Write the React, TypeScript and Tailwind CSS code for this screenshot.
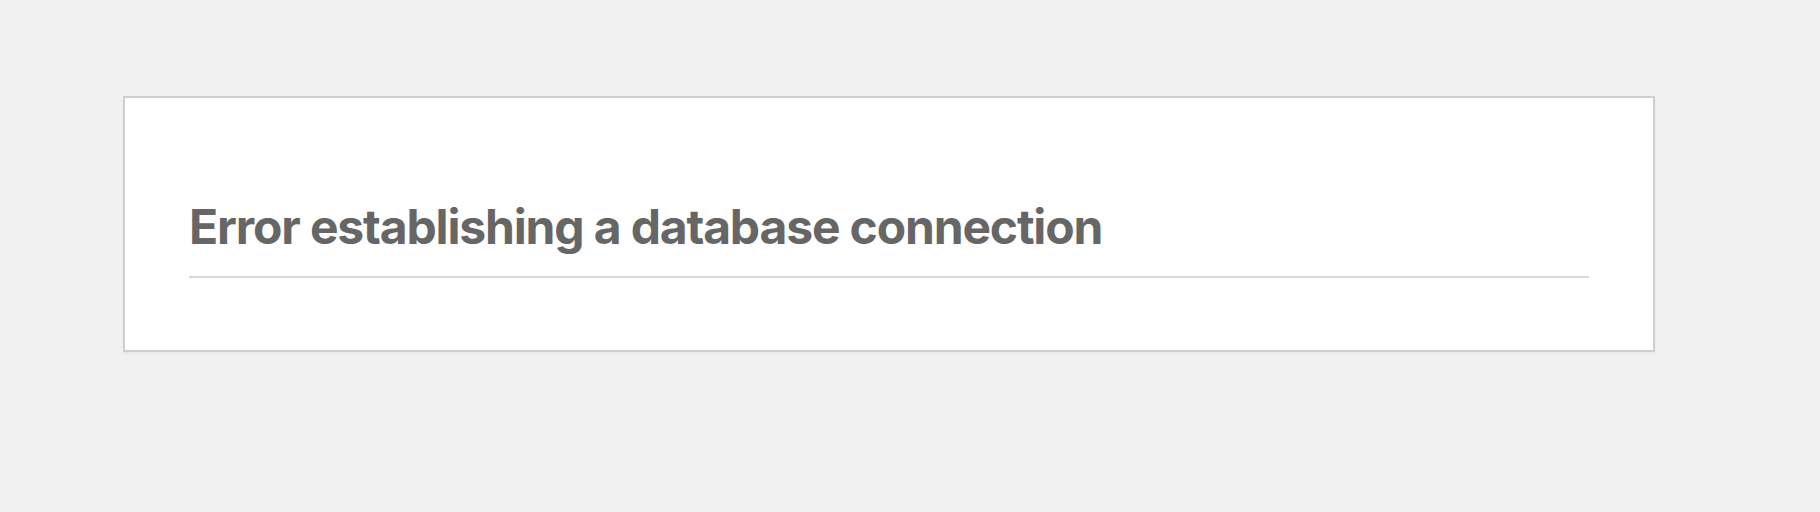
export default function App() {
  return (
    <div className="min-h-[512px] w-full bg-[#f1f1f1] pt-[96px] pl-[123px]" style={{ fontFamily: "Inter, 'Liberation Sans', sans-serif" }}>
      <div className="w-[1532px] border-2 border-[#ccd0d4] bg-white px-[64px] pt-[100px] pb-[72px] shadow-[0_2px_2px_rgba(0,0,0,0.04)]">
        <h1 className="m-0 border-b-2 border-[#dadada] pb-[20px] text-[48px] font-bold leading-[58px] tracking-[-1.15px] text-[#666]">
          Error establishing a database connection
        </h1>
      </div>
    </div>
  );
}
